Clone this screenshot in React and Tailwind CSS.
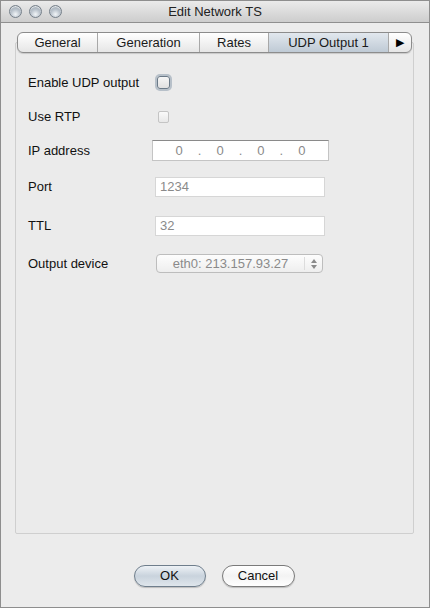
import React from 'react';

const font = { fontFamily: '"Liberation Sans", Arial, sans-serif' };

function Light() {
  return (
    <span className="w-[13px] h-[13px] rounded-full border border-[#76808a] bg-[radial-gradient(circle_at_50%_75%,#f2f5f8_0%,#bcc5ce_45%,#8b96a1_100%)] shadow-[inset_0_1px_1px_rgba(255,255,255,0.8)]" />
  );
}

function Tab({ label, w, selected, last }) {
  return (
    <div
      className={`h-full flex items-center justify-center text-[13px] text-[#1a1a1a] ${
        last ? '' : 'border-r border-[#a8a8a8]'
      } ${selected ? 'bg-gradient-to-b from-[#e2e8ee] to-[#bfcad5]' : ''}`}
      style={{ width: w }}
    >
      {label}
    </div>
  );
}

function Row({ label, mt, children }) {
  return (
    <div className={`flex items-center h-[21px] ${mt}`}>
      <div className="w-[127px] text-[13px] text-[#111]">{label}</div>
      <div className="flex items-center">{children}</div>
    </div>
  );
}

export default function App() {
  return (
    <div style={font} className="w-[430px] h-[608px] bg-[#ececec] border border-[#8e8e8e] flex flex-col overflow-hidden">
      {/* title bar */}
      <div className="h-[22px] shrink-0 relative flex items-center justify-center bg-gradient-to-b from-[#ebebeb] to-[#cdcdcd] border-b border-[#8f8f8f]">
        <div className="absolute left-[8px] top-[4px] flex gap-[7px]">
          <Light />
          <Light />
          <Light />
        </div>
        <span className="text-[13px] text-[#222]">Edit Network TS</span>
      </div>

      {/* body */}
      <div className="flex-1 flex flex-col pt-[9px] pl-[14px] pr-[15px]">
        <div className="relative z-10 mx-[2px] h-[21px] flex rounded-[6px] border border-[#8c8c8c] bg-gradient-to-b from-[#ffffff] to-[#e6e6e6] overflow-hidden shadow-[0_1px_1px_rgba(0,0,0,0.15)]">
          <Tab label="General" w={80} />
          <Tab label="Generation" w={102} />
          <Tab label="Rates" w={69} />
          <Tab label="UDP Output 1" w={120} selected />
          <div className="flex-1 flex items-center justify-center text-[11px] text-black">▶</div>
        </div>

        <div className="-mt-[11px] h-[492px] border border-[#cfcfcf] rounded-[2px] bg-[#ebebeb] pl-[12px] pt-[29px] flex flex-col">
          <Row label="Enable UDP output">
            <span className="ml-[2px] w-[13px] h-[13px] rounded-[3px] border border-[#6b7a88] bg-gradient-to-b from-[#f6f6f6] to-[#e0e0e0] shadow-[0_0_0_2px_rgba(120,140,160,0.45)]" />
          </Row>
          <Row label="Use RTP" mt="mt-[13px]">
            <span className="ml-[3px] w-[11px] h-[12px] rounded-[2px] border border-[#c4c4c4] bg-gradient-to-b from-[#fafafa] to-[#e8e8e8]" />
          </Row>
          <Row label="IP address" mt="mt-[13px]">
            <div className="-ml-[3px] w-[177px] h-[21px] bg-white border border-[#c4c4c4] border-t-[#8a8a8a] flex items-center justify-center text-[13px] text-[#8a8a8a]">
              <span>0</span>
              <span className="mx-[15px]">.</span>
              <span>0</span>
              <span className="mx-[15px]">.</span>
              <span>0</span>
              <span className="mx-[15px]">.</span>
              <span>0</span>
            </div>
          </Row>
          <Row label="Port" mt="mt-[15px]">
            <div className="w-[170px] h-[20px] bg-white border border-[#d6d6d6] flex items-center px-[4px] text-[13px] text-[#8a8a8a]">
              1234
            </div>
          </Row>
          <Row label="TTL" mt="mt-[18px]">
            <div className="w-[170px] h-[20px] bg-white border border-[#d6d6d6] flex items-center px-[4px] text-[13px] text-[#8a8a8a]">
              32
            </div>
          </Row>
          <Row label="Output device" mt="mt-[17px]">
            <div className="ml-[1px] w-[167px] h-[19px] rounded-[4px] border border-[#bdbdbd] bg-gradient-to-b from-[#fdfdfd] to-[#eeeeee] flex items-center text-[13px] text-[#8a8a8a]">
              <span className="flex-1 text-center">eth0: 213.157.93.27</span>
              <span className="w-[18px] h-[13px] border-l border-[#dcdcdc] flex flex-col items-center justify-center gap-[2px]">
                <svg width="6" height="4" viewBox="0 0 6 4"><path d="M3 0L6 4H0z" fill="#8a8a8a" /></svg>
                <svg width="6" height="4" viewBox="0 0 6 4"><path d="M0 0H6L3 4z" fill="#8a8a8a" /></svg>
              </span>
            </div>
          </Row>
        </div>

        <div className="flex justify-center gap-[16px] mt-[31px] -ml-[1px]">
          <button className="w-[72px] h-[22px] rounded-full border border-[#6f7e8c] bg-gradient-to-b from-[#eef2f6] via-[#c9d3dd] to-[#dfe6ec] text-[13px] text-[#111] shadow-[0_1px_1px_rgba(0,0,0,0.2)]">
            OK
          </button>
          <button className="w-[73px] h-[22px] rounded-full border border-[#7a7a7a] bg-gradient-to-b from-[#ffffff] via-[#f3f3f3] to-[#ffffff] text-[13px] text-[#111] shadow-[0_1px_1px_rgba(0,0,0,0.2)]">
            Cancel
          </button>
        </div>
      </div>
    </div>
  );
}
